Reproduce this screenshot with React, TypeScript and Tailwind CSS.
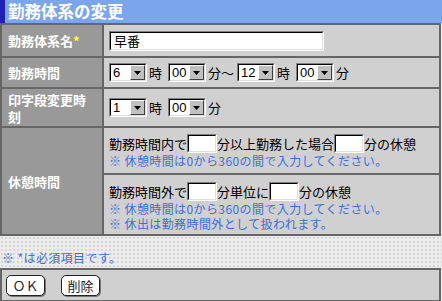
import type { ReactNode } from "react";

const jp = "font-['Noto_Sans_CJK_JP','Noto_Sans',sans-serif]";

function Select({ value }: { value: string }) {
  return (
    <span className="inline-flex h-[19px] w-[38px] items-stretch border border-t-[#808080] border-l-[#808080] border-b-white border-r-white align-middle">
      <span className="flex flex-1 items-stretch border border-t-black border-l-black border-b-[#dfdfdf] border-r-[#dfdfdf] bg-white">
        <span className="flex-1 pl-[2px] text-[13px] leading-[15px] font-['Liberation_Sans',sans-serif] text-black">
          {value}
        </span>
        <span className="flex w-[15px] items-center justify-center border border-t-white border-l-white border-b-[#404040] border-r-[#404040] bg-[#c0c0c0]">
          <svg width="7" height="4" viewBox="0 0 7 4">
            <path d="M0 0h7L3.5 4z" fill="#000" />
          </svg>
        </span>
      </span>
    </span>
  );
}

function NumInput() {
  return (
    <span className="inline-block h-[19px] w-[30px] border border-t-[#808080] border-l-[#808080] border-b-white border-r-white align-middle">
      <span className="block h-full w-full border border-t-black border-l-black border-b-[#dfdfdf] border-r-[#dfdfdf] bg-white" />
    </span>
  );
}

function Label({ children, rowSpan }: { children: ReactNode; rowSpan?: number }) {
  return (
    <td
      rowSpan={rowSpan}
      className="w-[102px] border-2 border-[#666] bg-[#999] px-[6px] text-[13px] leading-[17px] font-bold text-white"
    >
      {children}
    </td>
  );
}

function Button({ children, w }: { children: ReactNode; w: string }) {
  return (
    <button
      className={`${w} h-[21px] rounded-[5px] border border-[#222] bg-white text-[13px] leading-[17px] text-[#222] shadow-[1px_1px_0_#777]`}
    >
      {children}
    </button>
  );
}

export default function App() {
  return (
    <div className={`h-[301px] w-[442px] bg-[#ececec] ${jp}`}>
      <div className="flex h-[23px] items-center border-l-[5px] border-[#2020b8] bg-[#7ba6ee] pl-[3px] text-[16.5px] font-bold text-white">
        勤務体系の変更
      </div>

      <table className="w-[441px] border-collapse bg-[#d0d0d0] text-[12px] text-black">
        <tbody>
          <tr className="h-[33px]">
            <Label>
              勤務体系名<span className="text-[#ffff33]">*</span>
            </Label>
            <td className="border-2 border-[#666] px-[5px]">
              <span className="inline-block h-[20px] w-[215px] border border-t-[#808080] border-l-[#808080] border-b-white border-r-white align-middle">
                <span className="block h-full w-full border border-t-black border-l-black border-b-[#dfdfdf] border-r-[#dfdfdf] bg-white pl-[3px] text-[13px] leading-[16px]">
                  早番
                </span>
              </span>
            </td>
          </tr>
          <tr className="h-[31px]">
            <Label>勤務時間</Label>
            <td className="border-2 border-[#666] px-[5px] text-[13px]">
              <div className="flex items-center">
                <Select value="6" />
                <span className="mx-[2px]">時</span>
                <span className="ml-[4px]" />
                <Select value="00" />
                <span className="ml-[2px]">分〜</span>
                <span className="ml-[3px]" />
                <Select value="12" />
                <span className="mx-[2px]">時</span>
                <span className="ml-[4px]" />
                <Select value="00" />
                <span className="mx-[2px]">分</span>
              </div>
            </td>
          </tr>
          <tr className="h-[39px]">
            <Label>印字段変更時刻</Label>
            <td className="border-2 border-[#666] px-[5px] text-[13px]">
              <div className="flex items-center">
                <Select value="1" />
                <span className="mx-[2px]">時</span>
                <span className="ml-[4px]" />
                <Select value="00" />
                <span className="mx-[2px]">分</span>
              </div>
            </td>
          </tr>
          <tr className="h-[47px]">
            <Label rowSpan={2}>休憩時間</Label>
            <td className="border-2 border-[#666] px-[5px] pt-[6px] pb-[5px] align-top text-[13px] leading-[17px]">
              <div className="flex items-center">
                勤務時間内で<NumInput />分以上勤務した場合<NumInput />分の休憩
              </div>
              <div className="text-[12px] leading-[15px] tracking-[0.4px] text-[#3c6fdc]">
                ※ 休憩時間は0から360の間で入力してください。
              </div>
            </td>
          </tr>
          <tr className="h-[61px]">
            <td className="border-2 border-[#666] px-[5px] pt-[7px] pb-[3px] align-top text-[13px] leading-[17px]">
              <div className="flex items-center">
                勤務時間外で<NumInput />分単位に<NumInput />分の休憩
              </div>
              <div className="text-[12px] leading-[15px] tracking-[0.4px] text-[#3c6fdc]">
                ※ 休憩時間は0から360の間で入力してください。
                <br />※ 休出は勤務時間外として扱われます。
              </div>
            </td>
          </tr>
        </tbody>
      </table>

      <div className="h-[32px] bg-[radial-gradient(#d6d6d6_1px,transparent_1px)] bg-[length:4px_4px] pt-[14px] pl-[2px] text-[12px] leading-[16px] tracking-[0.4px] text-[#3c6fdc]">
        ※ *は必須項目です。
      </div>

      <div className="flex h-[34px] w-[441px] items-center gap-[16px] border-2 border-[#666] bg-[#d0d0d0] pl-[4px]">
        <Button w="w-[39px]">ＯＫ</Button>
        <Button w="w-[39px]">削除</Button>
      </div>
    </div>
  );
}
